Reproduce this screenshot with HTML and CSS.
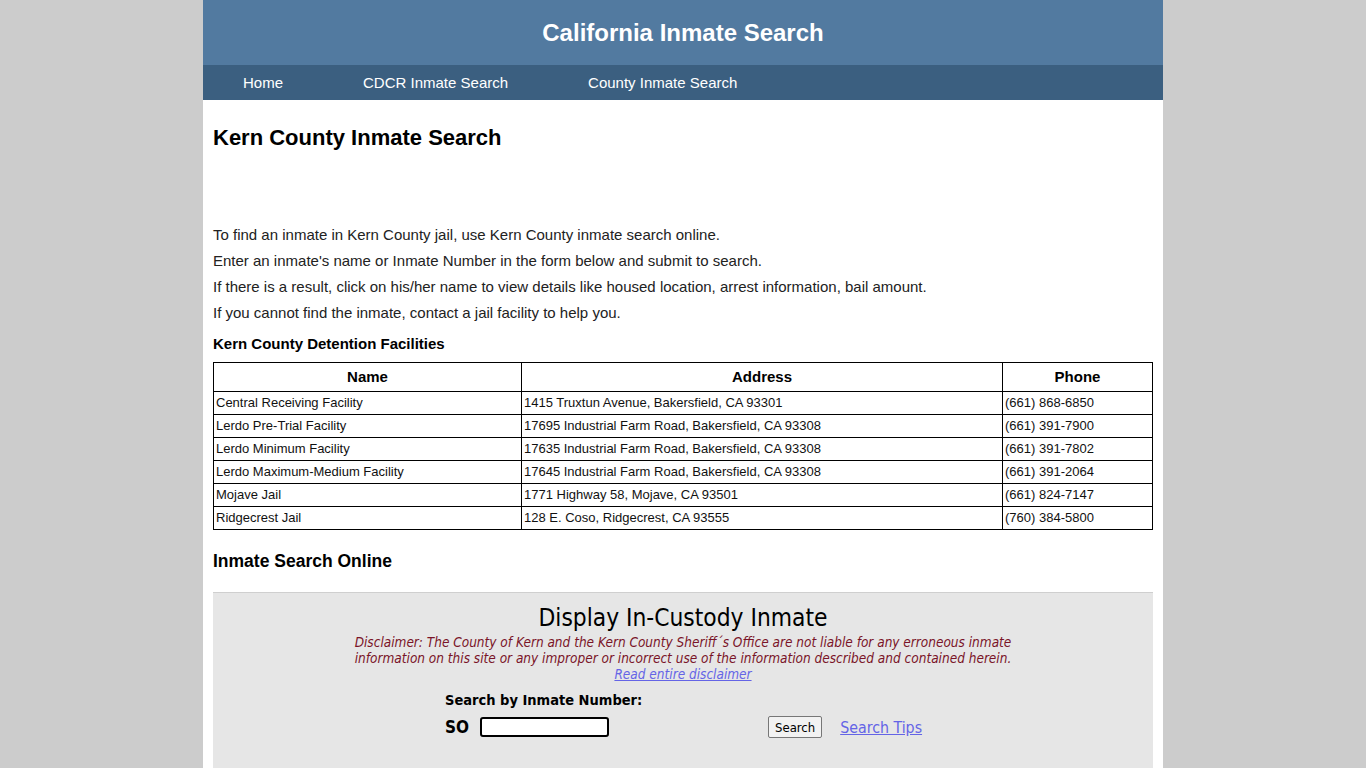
FILE: index.html
```html
<!DOCTYPE html>
<html lang="en">
<head>
<meta charset="utf-8">
<title>Kern County Inmate Search</title>
<link rel="stylesheet" href="styles.css">
</head>
<body>
<div class="page">
  <header class="site-header">
    <div class="site-title">California Inmate Search</div>
  </header>
  <nav class="site-nav">
    <a href="#">Home</a>
    <a href="#">CDCR Inmate Search</a>
    <a href="#">County Inmate Search</a>
  </nav>
  <main class="content">
    <h1 class="page-title">Kern County Inmate Search</h1>
    <div class="intro">
      <p>To find an inmate in Kern County jail, use Kern County inmate search online.</p>
      <p>Enter an inmate's name or Inmate Number in the form below and submit to search.</p>
      <p>If there is a result, click on his/her name to view details like housed location, arrest information, bail amount.</p>
      <p>If you cannot find the inmate, contact a jail facility to help you.</p>
    </div>
    <h3 class="section-sub">Kern County Detention Facilities</h3>
    <table class="facilities">
      <thead>
        <tr><th class="col-name">Name</th><th class="col-addr">Address</th><th class="col-phone">Phone</th></tr>
      </thead>
      <tbody>
        <tr><td>Central Receiving Facility</td><td>1415 Truxtun Avenue, Bakersfield, CA 93301</td><td>(661) 868-6850</td></tr>
        <tr><td>Lerdo Pre-Trial Facility</td><td>17695 Industrial Farm Road, Bakersfield, CA 93308</td><td>(661) 391-7900</td></tr>
        <tr><td>Lerdo Minimum Facility</td><td>17635 Industrial Farm Road, Bakersfield, CA 93308</td><td>(661) 391-7802</td></tr>
        <tr><td>Lerdo Maximum-Medium Facility</td><td>17645 Industrial Farm Road, Bakersfield, CA 93308</td><td>(661) 391-2064</td></tr>
        <tr><td>Mojave Jail</td><td>1771 Highway 58, Mojave, CA 93501</td><td>(661) 824-7147</td></tr>
        <tr><td>Ridgecrest Jail</td><td>128 E. Coso, Ridgecrest, CA 93555</td><td>(760) 384-5800</td></tr>
      </tbody>
    </table>
    <h2 class="section-title">Inmate Search Online</h2>
    <section class="search-box">
      <h2 class="search-title">Display In-Custody Inmate</h2>
      <p class="disclaimer">Disclaimer: The County of Kern and the Kern County Sheriff´s Office are not liable for any erroneous inmate<br>information on this site or any improper or incorrect use of the information described and contained herein.<br><a href="#">Read entire disclaimer</a></p>
      <form class="search-form">
        <div class="search-label">Search by Inmate Number:</div>
        <div class="search-row">
          <span class="prefix">SO</span>
          <input type="text" class="inmate-input">
          <button type="button" class="search-btn">Search</button>
          <a href="#" class="tips">Search Tips</a>
        </div>
      </form>
    </section>
  </main>
</div>
</body>
</html>
```
FILE: styles.css
```css
html, body {
  margin: 0;
  padding: 0;
  background: #cccccc;
  font-family: "Liberation Sans", Arial, sans-serif;
  color: #000;
}

.page {
  width: 960px;
  margin: 0 auto;
  background: #fff;
  min-height: 768px;
}

.site-header {
  height: 65px;
  background: #527aa0;
  display: flex;
  align-items: center;
  justify-content: center;
}

.site-title {
  color: #fff;
  font-weight: bold;
  font-size: 24px;
  padding-top: 1px;
}

.site-nav {
  height: 35px;
  background: #3b5f80;
  display: flex;
  align-items: center;
}

.site-nav a {
  color: #fff;
  text-decoration: none;
  font-size: 15px;
  padding: 0 40px;
}

.content {
  padding: 10px 10px 0;
}

.page-title {
  font-size: 22px;
  font-weight: bold;
  margin: 15px 0 0;
  line-height: 26px;
}

.intro {
  margin-top: 71px;
}

.intro p {
  margin: 0;
  font-size: 15px;
  line-height: 26px;
  color: #222;
}

.section-sub {
  font-size: 15px;
  font-weight: bold;
  margin: 8px 0 8px;
  line-height: 20px;
}

.facilities {
  width: 940px;
  border-collapse: collapse;
  border: 1px solid #000;
  font-size: 13px;
}

.facilities th,
.facilities td {
  border: 1px solid #000;
  text-align: left;
  padding: 0 2px 1px;
}

.facilities th {
  text-align: center;
  font-size: 15px;
  height: 27px;
}

.facilities td {
  height: 21px;
  color: #111;
}

.col-name { width: 303px; }
.col-addr { width: 476px; }

.section-title {
  font-size: 17.5px;
  font-weight: bold;
  margin: 20px 0 0;
  line-height: 22px;
}

.search-box {
  margin-top: 20px;
  background: #e6e6e6;
  border-top: 1px solid #cfcfcf;
  text-align: center;
  font-family: "DejaVu Sans Condensed", "DejaVu Sans", sans-serif;
  padding: 10px 0 30px;
}

.search-title {
  margin: 0;
  font-size: 24.3px;
  font-weight: 500;
  line-height: 30px;
  color: #000;
}

.disclaimer {
  margin: 1px 0 0;
  font-style: italic;
  font-size: 13.5px;
  line-height: 16px;
  color: #7a1428;
}

.disclaimer a {
  color: #6464e6;
}

.search-form {
  width: 476px;
  margin: 8px auto 0;
  text-align: left;
}

.search-label {
  font-weight: bold;
  font-size: 14.5px;
  line-height: 20px;
  color: #000;
}

.search-row {
  display: flex;
  align-items: center;
  margin-top: 6px;
  white-space: nowrap;
}

.prefix {
  font-weight: bold;
  font-size: 17px;
  margin-right: 11px;
}

.inmate-input {
  width: 125px;
  height: 16px;
  border: 2px solid #000;
  border-radius: 3px;
  background: #fff;
  padding: 0;
}

.search-btn {
  margin-left: 159px;
  font-family: "DejaVu Sans Condensed", "DejaVu Sans", sans-serif;
  font-size: 13px;
  background: #f2f2f2;
  border: 1px solid #777;
  border-radius: 2px;
  height: 22px;
  padding: 0 6px;
}

.tips {
  flex: none;
  margin-left: 18px;
  font-size: 15.8px;
  color: #6464e6;
}
```
